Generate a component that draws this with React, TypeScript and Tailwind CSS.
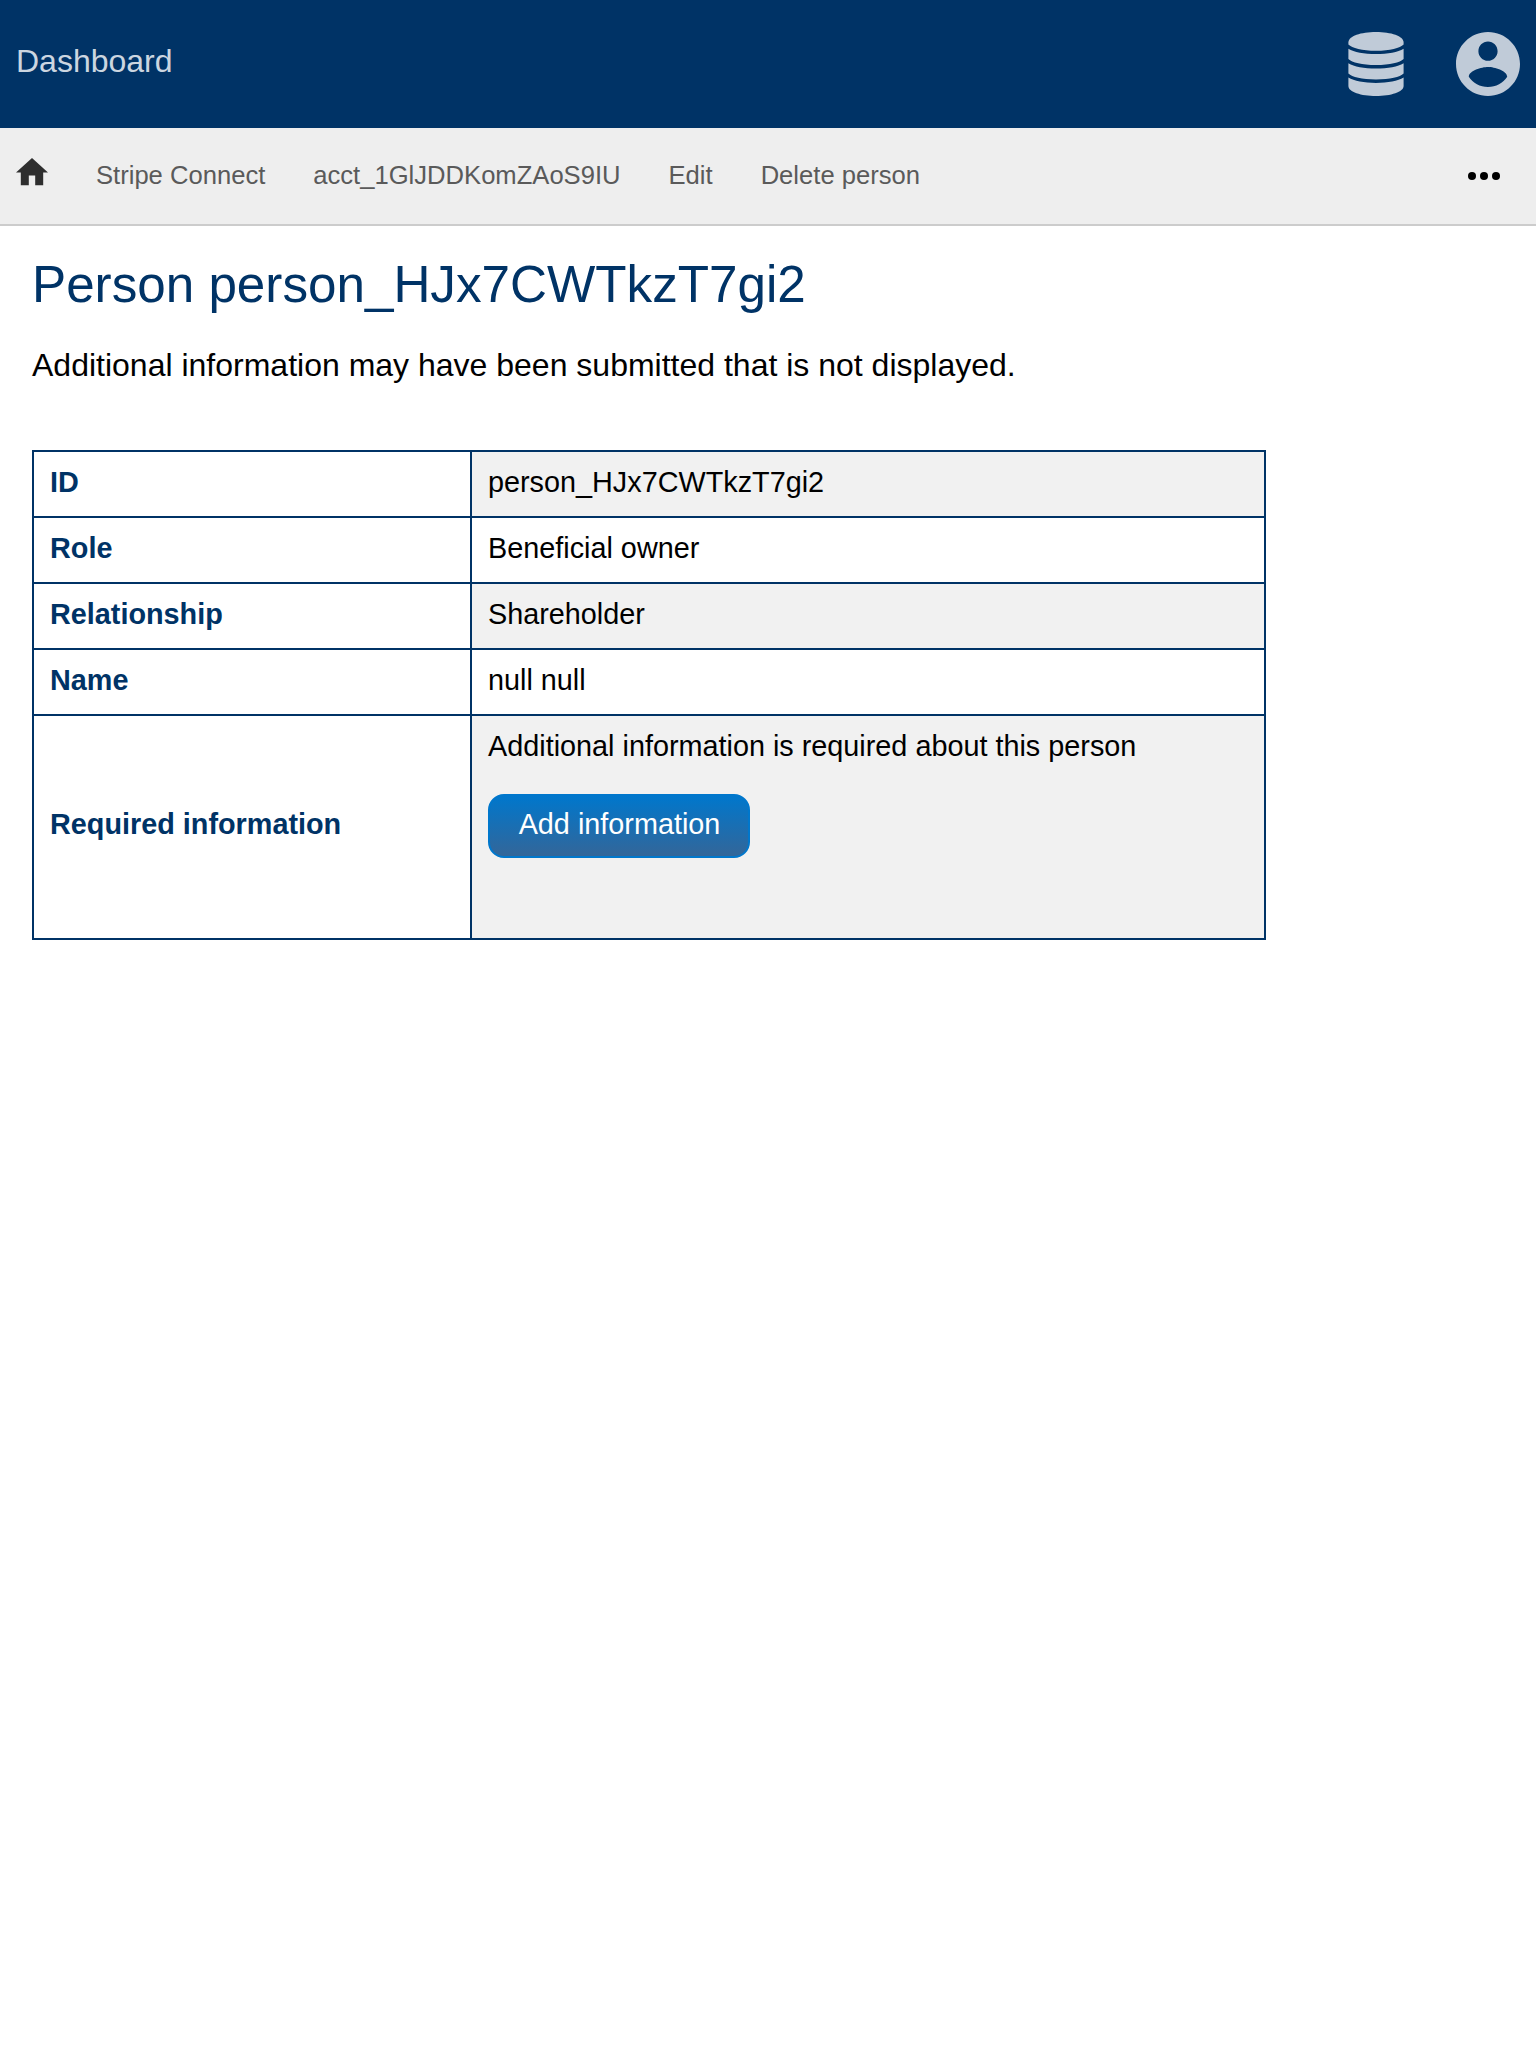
import React from "react";

const rows = [
  ["ID", "person_HJx7CWTkzT7gi2"],
  ["Role", "Beneficial owner"],
  ["Relationship", "Shareholder"],
  ["Name", "null null"],
];

const links = ["Stripe Connect", "acct_1GlJDDKomZAoS9IU", "Edit", "Delete person"];

function DatabaseIcon() {
  return (
    <svg className="h-16 w-14" viewBox="0 0 56 64" fill="#c0cbd8">
      <path d="M28 0C43 0 55.600 4 55.600 10.500V12.500C52 16 42 18.800 28 18.800S4 16 0.400 12.500V10.500C0.400 4 13 0 28 0Z" />
      <path d="M0.400 16.700C6 20 16 22 28 22S50 20 55.600 16.700V27C52 30.500 42 33 28 33S4 30.500 0.400 27Z" />
      <path d="M0.400 31.200C6 34.500 16 36.500 28 36.500S50 34.500 55.600 31.200V41.500C52 45 42 47.400 28 47.400S4 45 0.400 41.500Z" />
      <path d="M0.400 45.500C6 48.800 16 50.900 28 50.900S50 48.800 55.600 45.500V54C55.600 60 43 64 28 64S0.400 60 0.400 54Z" />
    </svg>
  );
}

export default function App() {
  return (
    <div className="min-h-[2048px] w-full bg-white font-['Liberation_Sans',Arial,sans-serif] text-black">
      <header className="flex h-32 items-start justify-between bg-[#003366] px-4">
        <a className="pt-[43px] text-[32px] leading-9 text-[#ccd6e0]">Dashboard</a>
        <div className="flex gap-[52px] pt-8">
          <DatabaseIcon />
          <svg className="size-16" viewBox="2 2 20 20" fill="#c0cbd8">
            <path d="M12 2C6.480 2 2 6.480 2 12s4.480 10 10 10 10-4.480 10-10S17.520 2 12 2zm0 3c1.660 0 3 1.340 3 3s-1.340 3-3 3-3-1.340-3-3 1.340-3 3-3zm0 14.200c-2.500 0-4.710-1.280-6-3.220.030-1.990 4-3.080 6-3.080 1.990 0 5.970 1.090 6 3.080-1.290 1.940-3.500 3.220-6 3.220z" />
          </svg>
        </div>
      </header>
      <nav className="flex h-[98px] items-start border-b-2 border-[#cccccc] bg-[#eeeeee] pl-4 pr-9">
        <svg className="mr-12 mt-[30.400px] h-[27.200px] w-8" viewBox="2 3 20 17" fill="#2e2e2e">
          <path d="M10 20v-6h4v6h5v-8h3L12 3 2 12h3v8z" />
        </svg>
        <div className="flex gap-12 pt-8 text-[25.600px] leading-[30px] text-[#5a5a5a]">
          {links.map((l) => (
            <a key={l}>{l}</a>
          ))}
        </div>
        <svg className="ml-auto mt-11 h-2 w-8" viewBox="0 0 32 8">
          <circle cx="4" cy="4" r="4" />
          <circle cx="16" cy="4" r="4" />
          <circle cx="28" cy="4" r="4" />
        </svg>
      </nav>
      <main className="px-8 pt-[30px]">
        <h1 className="text-[51.200px] leading-[58px] text-[#003366]">Person person_HJx7CWTkzT7gi2</h1>
        <p className="mt-[33px] text-[32px] leading-9">Additional information may have been submitted that is not displayed.</p>
        <div className="mt-[67px] grid w-[1234px] grid-cols-[438px_1fr] border-2 border-[#003366] text-[28.800px] leading-8">
          {rows.map(([k, v], i) => (
            <React.Fragment key={k}>
              <div className="h-[66px] border-b-2 border-r-2 border-[#003366] px-4 pt-[14px] font-bold text-[#003366]">{k}</div>
              <div className={`h-[66px] border-b-2 border-[#003366] px-4 pt-[14px] ${i % 2 ? "bg-white" : "bg-[#f1f1f1]"}`}>{v}</div>
            </React.Fragment>
          ))}
          <div className="flex h-[222px] items-center border-r-2 border-[#003366] px-4 pb-1.5 font-bold text-[#003366]">Required information</div>
          <div className="h-[222px] bg-[#f1f1f1] px-4 pt-[14px]">
            <p>Additional information is required about this person</p>
            <button className="mt-8 flex h-16 w-[262px] items-start justify-center rounded-2xl border-2 border-[#0077cc] bg-[linear-gradient(to_bottom,#0077cc,#336699)] pl-px pt-3 leading-8 text-white">
              Add information
            </button>
          </div>
        </div>
      </main>
    </div>
  );
}
